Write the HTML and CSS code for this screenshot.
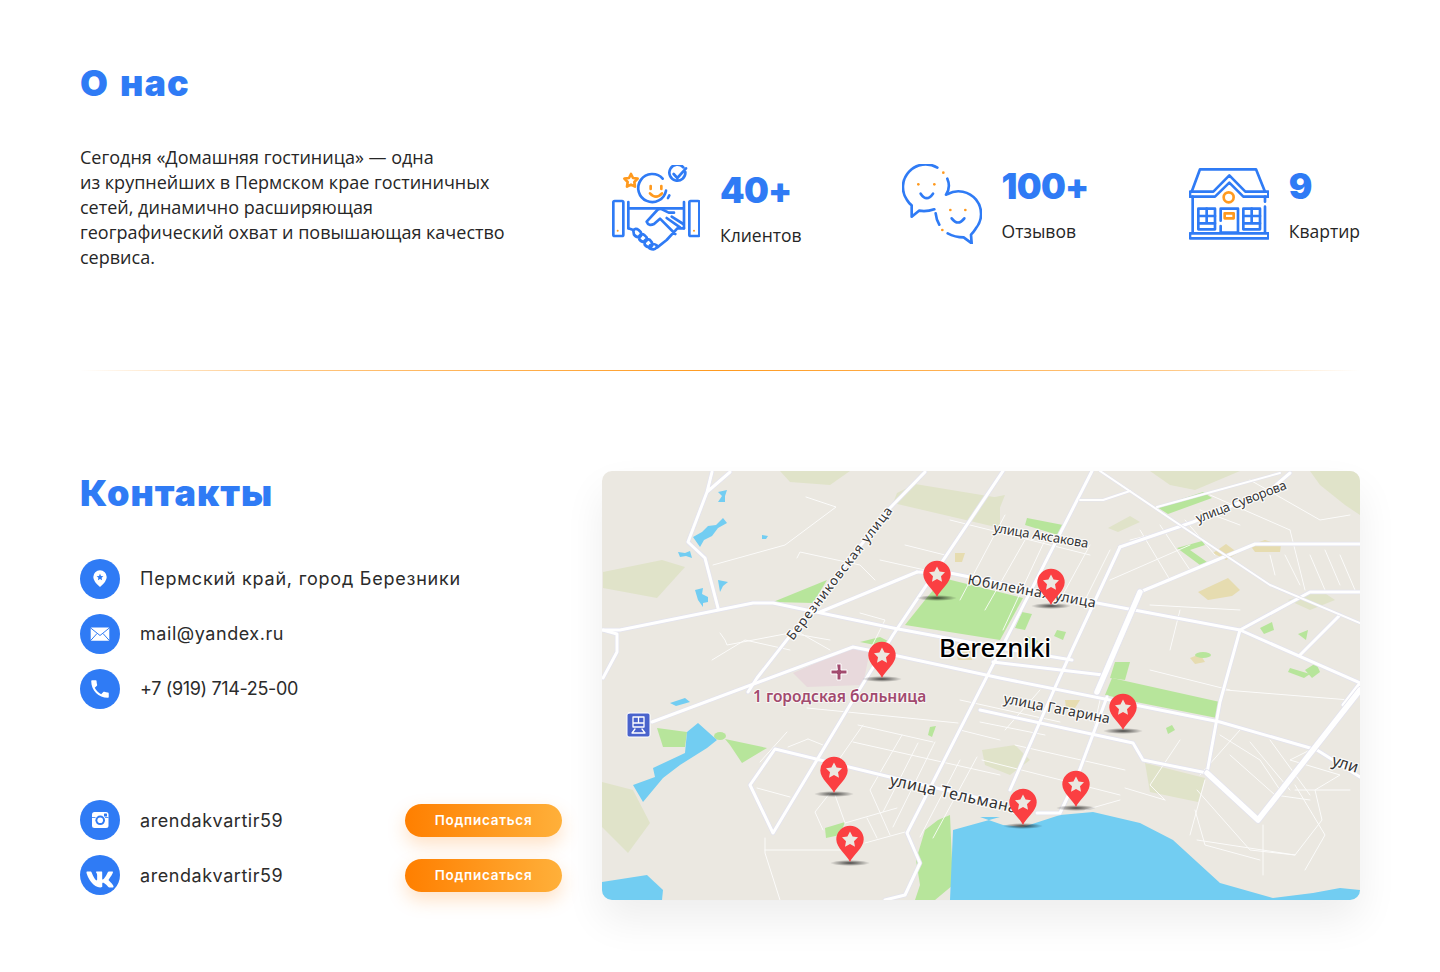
FILE: index.html
```html
<!DOCTYPE html>
<html lang="ru">
<head>
<meta charset="utf-8">
<title>О нас</title>
<link rel="stylesheet" href="styles.css">
</head>
<body>
<section class="about">
  <h2 class="heading">О нас</h2>
  <div class="about-body">
    <p class="about-text">Сегодня «Домашняя гостиница» — одна<br>из крупнейших в Пермском крае гостиничных сетей, динамично расширяющая географический охват и повышающая качество сервиса.</p>
    <div class="stats">
      <div class="stat stat-first">
        <svg class="stat-icon icon-hands" viewBox="36 45 264 258" fill="none" stroke-linecap="round" stroke-linejoin="round">
          <g class="ib">
            <rect x="40" y="153" width="30" height="105" rx="4"/>
            <rect x="268" y="153" width="30" height="105" rx="4"/>
            <path d="M85 156V235M252 156V235M85 175H252"/>
            <path d="M140 215L172 180Q178 175 186 178L206 188H222M140 215Q146 230 162 222L180 206L226 252M200 204L240 232M215 200L250 222M252 235H232L200 270L172 292M85 235L100 240"/>
            <path d="M100 242Q106 232 116 240L122 246Q128 256 118 262Q108 262 102 254ZM118 258Q124 248 134 256L140 262Q144 272 134 276Q124 276 118 268ZM134 272Q140 264 150 270L156 278Q160 288 150 292Q140 292 134 284ZM150 286Q160 278 170 286Q172 296 160 298Q150 298 146 292"/>
            <path d="M198 122A42 42 0 1 1 188 86M208 136L204 144"/>
            <path d="M250 52A24 24 0 1 0 256 66M221 72L232 84L258 55"/>
          </g>
          <g class="io">
            <path d="M93 72L99 84L113 86L103 96L105 110L93 104L81 110L83 96L73 86L87 84Z"/>
            <path d="M152 108V117M184 108V117M150 130Q168 150 186 130"/>
          </g>
          <circle class="dot" cx="53" cy="242" r="3"/><circle class="dot" cx="282" cy="242" r="3"/>
        </svg>
        <div class="stat-copy"><div class="stat-num">40+</div><div class="stat-label">Клиентов</div></div>
      </div>
      <div class="stat">
        <svg class="stat-icon icon-chat" viewBox="39 42 240 240" fill="none" stroke-linecap="round" stroke-linejoin="round">
          <g class="ib">
            <path d="M145 53A68 68 0 0 0 54 150Q60 160 68 166L68 200L90 182Q112 186 136 178M175 86Q186 112 171 134"/>
            <path d="M176 132A68 68 0 0 1 260 236Q252 248 246 254L248 280L224 262Q198 262 176 250M140 190Q142 210 151 224"/>
            <path d="M95 131Q113 158 132 131M188 205Q207 230 226 205"/>
          </g>
          <circle class="dot" cx="163" cy="68" r="4"/><circle class="dot" cx="88" cy="103" r="4"/><circle class="dot" cx="136" cy="103" r="4"/>
          <circle class="dot" cx="184" cy="180" r="4"/><circle class="dot" cx="229" cy="180" r="4"/><circle class="dot" cx="160" cy="240" r="4"/>
        </svg>
        <div class="stat-copy"><div class="stat-num">100+</div><div class="stat-label">Отзывов</div></div>
      </div>
      <div class="stat">
        <svg class="stat-icon icon-house" viewBox="57 54 240 216" fill="none" stroke-linecap="round" stroke-linejoin="round">
          <g class="ib">
            <path d="M65 125L90 58H258L285 125"/>
            <path d="M60 125H130L178 76L226 125H295V140H220L178 98L135 140H60Z"/>
            <path d="M68 140V248M285 170V248M285 140V155"/>
            <rect x="60" y="250" width="235" height="15"/>
            <path d="M152 212V176H204V248H152V228"/>
            <rect x="85" y="176" width="50" height="62"/><path d="M85 198H135M85 220H135M110 176V220"/>
            <rect x="220" y="176" width="50" height="62"/><path d="M220 198H270M220 220H270M245 176V220"/>
          </g>
          <g class="io"><circle cx="176" cy="142" r="15"/><rect x="164" y="190" width="27" height="15"/></g>
        </svg>
        <div class="stat-copy"><div class="stat-num">9</div><div class="stat-label">Квартир</div></div>
      </div>
    </div>
  </div>
</section>

<div class="divider"></div>

<section class="contacts">
  <div class="contacts-left">
    <h2 class="heading">Контакты</h2>
    <ul class="contact-list">
      <li class="contact-row">
        <span class="badge"><svg viewBox="0 0 40 40"><path class="w" d="M20 28Q13.300 22.500 13.300 18A6.700 6.700 0 0 1 26.700 18Q26.700 22.500 20 28Z"/><path class="b" d="M20 14.700L21 17L23.400 17.200L21.600 18.800L22.100 21.200L20 20L17.900 21.200L18.400 18.800L16.600 17.200L19 17Z"/></svg></span>
        <span class="contact-text text-cyr">Пермский край, город Березники</span>
      </li>
      <li class="contact-row">
        <span class="badge"><svg viewBox="0 0 40 40"><rect class="w" x="10.700" y="13.400" width="18.600" height="13.300" rx="1"/><path class="bl" d="M10.700 14L20 21.500L29.300 14M10.700 26.500L17 19.500M29.300 26.500L23 19.500"/></svg></span>
        <span class="contact-text">mail@yandex.ru</span>
      </li>
      <li class="contact-row">
        <span class="badge"><svg viewBox="-8.500 -8.500 41 41"><path class="w" d="M6.620 10.790c1.440 2.830 3.760 5.140 6.590 6.590l2.200-2.200c.27-.27.67-.36 1.020-.24 1.120.37 2.330.57 3.570.57.55 0 1 .45 1 1V20c0 .55-.45 1-1 1-9.390 0-17-7.610-17-17 0-.55.45-1 1-1h3.500c.55 0 1 .45 1 1 0 1.250.2 2.450.57 3.570.11.35.03.74-.25 1.020l-2.200 2.200z"/></svg></span>
        <span class="contact-text text-num">+7 (919) 714-25-00</span>
      </li>
    </ul>
    <ul class="social-list">
      <li class="contact-row">
        <span class="badge"><svg viewBox="0 0 40 40"><rect class="w" x="12" y="12" width="16.500" height="16" rx="2.500"/><circle class="b" cx="20.200" cy="20.300" r="4.800"/><circle class="w" cx="20.200" cy="20.300" r="2.800"/><rect class="b" x="24" y="13.500" width="3" height="3" rx=".6"/><path class="bl thin" d="M12 17.500H15.500M25 17.500H28.500"/></svg></span>
        <span class="contact-text">arendakvartir59</span>
        <a class="subscribe" href="#">Подписаться</a>
      </li>
      <li class="contact-row">
        <span class="badge"><svg viewBox="-110 -230 796 796"><path class="w" d="M545 117.700c3.700-12.500 0-21.700-17.800-21.700h-58.900c-15 0-21.900 7.900-25.600 18.700 0 0-30.500 75.600-73.600 124.700-13.900 13.900-20.300 18.400-27.900 18.400-3.800 0-9.400-4.500-9.400-17V117.700c0-15-4.200-21.700-16.600-21.700h-92.600c-9.400 0-15 7-15 13.500 0 14.200 21.200 17.500 23.400 57.500v86.800c0 19-3.400 22.500-10.900 22.500-20 0-68.600-73.400-97.400-157.400-5.800-16.300-11.500-22.900-26.600-22.900H38.800c-16.800 0-20.200 7.900-20.200 16.700 0 15.600 20 93.100 93.100 195.500C160.400 378.100 229 416 291.400 416c37.500 0 42.100-8.400 42.100-22.900 0-66.800-3.400-73.100 15.400-73.100 8.700 0 23.700 4.400 58.700 38.100 40 40 46.600 57.900 69 57.900h58.900c16.800 0 25.300-8.400 20.400-25-11.200-34.900-86.900-106.700-90.300-111.500-8.700-11.200-6.200-16.200 0-26.200.1-.1 72-101.300 79.400-135.600z"/></svg></span>
        <span class="contact-text">arendakvartir59</span>
        <a class="subscribe" href="#">Подписаться</a>
      </li>
    </ul>
  </div>

  <div class="map">
    <svg class="map-svg" viewBox="602 471 758 429" fill="none" stroke-linecap="round" stroke-linejoin="round">
      <defs>
        <g id="majors">
          <path d="M603 630L620 630L753 603H773L893 628L1000 648L1072 660"/>
          <path d="M917 572L950 573L1097 603L1240 630L1360 683"/>
          <path d="M1003 471L893 635L853 700L773 833L750 785L775 749L890 777L1000 803"/>
          <path d="M1092 471L907 833L920 863L905 895L885 900"/>
          <path d="M1120 547L1073 648L1053 692L1010 790"/>
          <path d="M1120 547L1193 522L1270 490L1290 473"/>
          <path d="M1140 592L1097 692"/>
          <path d="M1140 592L1255 544H1360"/>
          <path d="M1240 630L1310 592H1360M1240 630L1220 702L1207 773"/>
          <path d="M1340 615L1300 655M1360 683L1343 705"/>
          <path d="M652 722L853 647L893 655L1000 678L1220 722L1317 750L1360 777"/>
          <path d="M993 662L1103 675"/>
          <path d="M1107 697L1077 777L1060 813H1037"/>
          <path d="M1207 773L1143 760L1133 743L980 710"/>
          <path d="M925 472L890 508L757 678L748 692"/>
          <path d="M730 472L707 492L688 542L705 558L718 608M712 472L707 492"/>
          <path d="M603 630L617 634V652L603 678"/>
          <path d="M820 612L917 572"/>
        </g>
        <g id="thins">
          <path d="M1100 471L1180 525L1270 585L1360 623"/>
          <path d="M1080 500H1103L1130 491"/>
          <path d="M1157 507L1280 473"/>
        </g>
        <g id="thick">
          <path d="M1360 690L1258 820L1207 773"/>
          <path d="M1140 592L1097 692"/>
        </g>
        <symbol id="pin" overflow="visible">
          <path class="pin-body" d="M0 0C-3 -7 -13.700 -14 -13.700 -22.500A13.700 13.700 0 1 1 13.700 -22.500C13.700 -14 3 -7 0 0Z"/>
          <path class="pin-star" d="M0 -30.500L2.600 -25.500L8 -24.700L4 -20.800L5 -15.300L0 -18L-5 -15.300L-4 -20.800L-8 -24.700L-2.600 -25.500Z"/>
        </symbol>
        <radialGradient id="shadow"><stop offset="0" stop-color="#000" stop-opacity=".7"/><stop offset="1" stop-color="#000" stop-opacity="0"/></radialGradient>
      </defs>

      <rect class="land" x="602" y="471" width="758" height="429"/>

      <g class="pale">
        <path d="M897 493L915 484L1000 498V528L893 503Z"/>
        <path d="M603 572L662 560L685 567L657 598L603 588Z"/>
        <path d="M602 782L633 790L650 823L628 853L602 827Z"/>
        <path d="M780 471H850L830 485L790 482Z"/>
        <path d="M1150 471H1240L1195 490L1170 485Z"/>
        <path d="M1310 471H1360V515L1345 505L1320 485Z"/>
        <path d="M1108 528L1130 516L1140 522L1118 532Z"/>
        <path d="M980 500L1005 495L995 520L980 520Z"/>
        <path d="M1145 763L1205 778L1198 802L1150 792Z"/>
        <path d="M982 750L1015 745L1030 760L1010 775L985 765Z"/>
        <path d="M1288 600L1320 590L1335 600L1310 610Z"/>
      </g>
      <g class="sand">
        <path d="M1198 592L1228 578L1240 590L1232 596L1208 600Z"/>
        <path d="M1213 553L1226 544L1238 553L1226 560Z"/>
        <path d="M1250 545L1265 540L1281 545L1280 552L1255 552Z"/>
        <path d="M1190 658L1200 654L1205 662L1195 664Z"/>
        <path d="M955 553H965L962 562H955Z"/>
        <path d="M955 648L975 646L972 660L958 660Z"/>
        <path d="M1065 700L1080 700L1075 708L1066 708Z"/>
      </g>
      <g class="park">
        <path d="M943 578L1023 598L1000 640L905 625L925 600Z"/>
        <path d="M773 602L827 580L813 603Z"/>
        <path d="M860 642L880 637L890 642L885 647Z"/>
        <path d="M1157 507L1203 492L1212 498L1168 514Z"/>
        <path d="M1177 548L1202 541L1205 545L1190 550L1207 562L1200 565Z"/>
        <path d="M1027 518L1063 525L1058 535L1025 525Z"/>
        <path d="M1112 678L1220 702L1217 718L1136 702L1105 695Z"/>
        <path d="M1115 662L1130 662L1125 680L1110 678Z"/>
        <path d="M1022 612L1032 614L1025 630L1015 628Z"/>
        <path d="M657 728L687 732L685 747L663 747Z"/>
        <path d="M725 739L767 748L742 763L730 745Z"/>
        <ellipse cx="720" cy="736" rx="6" ry="4"/>
        <path d="M825 828L845 822L840 835L826 838Z"/>
        <path d="M916 860L925 830L938 820L950 815L953 885L935 900H915L920 885Z"/>
        <path d="M1260 628L1272 622L1274 630L1264 634Z"/>
        <path d="M1290 668L1310 674L1304 678L1288 672Z"/>
        <path d="M1305 670L1316 663L1320 672L1312 678Z"/>
        <path d="M1298 634L1308 630L1306 640Z"/>
        <path d="M1057 630L1066 632L1063 640L1054 636Z"/>
        <path d="M930 727L936 726L932 737L928 735Z"/>
        <path d="M1166 728L1172 725L1175 730L1168 734Z"/>
        <path d="M1027 636L1038 641L1033 650L1024 645Z"/>
        <ellipse cx="1203" cy="655" rx="8" ry="3"/>
      </g>
      <path class="hospital" d="M793 673L853 647L870 650L863 685L807 687Z"/>
      <g class="water">
        <path d="M980 817L1003 825L1023 827L1060 815L1093 812L1140 823L1173 840L1220 883L1273 898L1313 893L1340 888L1360 890V900H950L953 830L1000 817Z"/>
        <path d="M633 785L655 777L653 768L685 753L687 732L698 723L717 740L707 748L680 765L663 778L643 802Z"/>
        <path d="M602 882L647 875L663 890L662 900H602Z"/>
        <path d="M693 537L702 532L708 526L716 525L723 518L727 523L718 528L712 536L704 540L700 547Z"/>
        <path d="M678 552L685 553L690 551L692 558L686 556L680 557Z"/>
        <path d="M718 580L728 582L723 586L720 592Z"/>
        <path d="M695 590L703 588L702 594L708 597L708 602L703 603L703 607L698 600Z"/>
        <path d="M718 492L727 490L725 496L725 502L718 502L722 496Z"/>
        <path d="M670 703L685 698L690 702L676 706Z"/>
        <path d="M762 535L768 536L766 539H762Z"/>
      </g>

      <g class="minor">
        <path d="M806 497L836 507L785 545L713 565M797 558L800 552L860 565L875 580M860 613L885 620L870 650"/>
        <path d="M720 633L725 640L727 645L790 633L830 640M712 660L745 640L790 650"/>
        <path d="M800 633L830 650"/>
        <path d="M905 545L945 555M880 560L925 570M950 520L1090 555"/>
        <path d="M1005 515L960 600M1025 540L985 610M1045 540L1003 630"/>
        <path d="M1090 545L1060 600M1110 550L1085 600"/>
        <path d="M1130 540L1170 530M1110 580L1190 545M1140 530L1170 580M1160 525L1190 570M1185 520L1215 555"/>
        <path d="M1200 510L1240 525M1210 495L1290 530M1250 480L1320 520L1350 515"/>
        <path d="M1290 530L1305 590M1270 555L1275 575M1285 555L1300 585M1310 555L1325 590M1325 550L1340 585M1340 555L1355 590"/>
        <path d="M1150 605L1240 610M1180 610L1170 650M1150 670L1230 690"/>
        <path d="M1225 690L1350 700"/>
        <path d="M1100 700L1090 745M1040 690L1005 730M980 722L1045 735M960 700L1060 722M982 760L1120 795M1015 745L1125 770"/>
        <path d="M863 725L840 758M808 739L788 747M808 739L823 745M787 732L760 762"/>
        <path d="M835 795L845 823M830 793L815 812L823 830M845 823L897 808M867 818L877 838"/>
        <path d="M890 835L870 790L902 735M883 812L918 743M893 827L935 742M865 843L905 832"/>
        <path d="M765 850H847M765 838V853L780 900M757 788L790 797"/>
        <path d="M920 837L960 760M933 838L977 757"/>
        <path d="M807 708L958 723M960 730L1000 740M858 725L933 742M853 742L1000 775"/>
        <path d="M1240 730L1200 775M1220 735L1260 760L1280 790M1230 755L1275 795L1310 800M1250 742L1290 790M1270 740L1310 795"/>
        <path d="M1310 750L1290 760L1340 775L1315 790L1322 820L1295 855L1197 840M1197 790L1250 850L1295 855M1195 810L1205 845L1260 860M1295 785L1325 835L1305 870M1263 825L1263 875M1295 790H1350"/>
        <path d="M1205 780L1190 835M1180 740L1150 785L1165 800M1125 788L1165 800M1085 810L1120 800"/>
      </g>

      <use class="casing" href="#majors"/><use class="road" href="#majors"/>
      <use class="casing slim" href="#thins"/><use class="road slim" href="#thins"/>
      <use class="casing wide" href="#thick"/><use class="road wide" href="#thick"/>

      <g class="pin-shadows">
        <ellipse cx="937" cy="598" rx="20" ry="3" fill="url(#shadow)"/><ellipse cx="882" cy="679" rx="20" ry="3" fill="url(#shadow)"/>
        <ellipse cx="1051" cy="606" rx="20" ry="3" fill="url(#shadow)"/><ellipse cx="1123" cy="731" rx="20" ry="3" fill="url(#shadow)"/>
        <ellipse cx="1076" cy="808" rx="20" ry="3" fill="url(#shadow)"/><ellipse cx="1023" cy="826" rx="20" ry="3" fill="url(#shadow)"/>
        <ellipse cx="834" cy="794" rx="20" ry="3" fill="url(#shadow)"/><ellipse cx="850" cy="863" rx="20" ry="3" fill="url(#shadow)"/>
      </g>

      <g class="labels">
        <text class="lbl" transform="translate(793 641) rotate(-52.500)" textLength="164">Березниковская улица</text>
        <text class="lbl" transform="translate(993 532) rotate(9.500)" textLength="96">улица Аксакова</text>
        <text class="lbl" transform="translate(1198 523) rotate(-21)" textLength="96">улица Суворова</text>
        <text class="lbl lbl-lg" transform="translate(967 584) rotate(10.500)" textLength="130">Юбилейная улица</text>
        <text class="lbl lbl-lg" transform="translate(1003 703) rotate(11)" textLength="108">улица Гагарина</text>
        <text class="lbl lbl-xl" transform="translate(889 785) rotate(12.500)" textLength="130">улица Тельмана</text>
        <text class="lbl lbl-xl" transform="translate(1331 765) rotate(17)">ули</text>
        <text class="town" x="939" y="657">Berezniki</text>
        <text class="poi" x="753" y="702">1 городская больница</text>
      </g>
      <path class="cross" d="M837 664H841V670H847V674H841V680H837V674H831V670H837Z"/>
      <g class="metro">
        <rect x="627" y="713" width="23" height="24" rx="2"/>
        <path class="metro-w" d="M633 717H644V727H633ZM635 729L632 733H645L642 729M638.500 717V723M633 723H644"/>
      </g>

      <use href="#pin" x="937" y="597"/><use href="#pin" x="882" y="678"/>
      <use href="#pin" x="1051" y="605"/><use href="#pin" x="1123" y="730"/>
      <use href="#pin" x="1076" y="807"/><use href="#pin" x="1023" y="825"/>
      <use href="#pin" x="834" y="793"/><use href="#pin" x="850" y="862"/>
    </svg>
  </div>
</section>
</body>
</html>
```
FILE: styles.css
```css
* { box-sizing: border-box; }
html, body { margin: 0; padding: 0; }
body {
  width: 1440px;
  height: 972px;
  overflow: hidden;
  background: #fff;
  color: #222;
  font-family: "Open Sans", "Noto Sans", sans-serif;
}
ul { list-style: none; margin: 0; padding: 0; }
.heading {
  margin: 0;
  font: 900 36px/40px Inter, "Noto Sans", sans-serif;
  letter-spacing: 1px;
  word-spacing: 3px;
  color: #2f7bf5;
}
.about { padding: 63px 80px 0; }
.about-body { display: flex; margin-top: 42px; height: 125px; }
.about-text {
  width: 430px;
  margin: 0;
  font-size: 18px;
  line-height: 25px;
  color: #262626;
}
.stats {
  flex: 1;
  display: flex;
  justify-content: space-between;
  margin-left: 102px;
  padding-top: 19px;
}
.stat { display: flex; gap: 20px; align-items: flex-start; }
.stat-first { margin-top: 1px; }
.stat-icon { display: block; flex: none; }
.icon-hands { width: 88px; height: 86px; }
.icon-chat { width: 80px; height: 80px; }
.icon-house { width: 80px; height: 72px; margin-top: 4px; }
.stat-copy { padding-top: 1px; }
.stat-first .stat-copy { padding-top: 4px; }
.stat-num {
  font: 900 35px/42px Inter, "Noto Sans", sans-serif;
  letter-spacing: -.7px;
  color: #2f7bf5;
}
.stat-label { margin-top: 12px; font-size: 17.500px; line-height: 25px; color: #262626; }
.ib path, .ib rect, .ib circle { stroke: #2f7bf5; stroke-width: 8; }
.io path, .io rect, .io circle { stroke: #ff9a1f; stroke-width: 8; }
.dot { fill: #ff9a1f; }
.divider {
  height: 1px;
  margin: 100px 80px 0;
  background: linear-gradient(90deg, rgba(255,154,31,0), rgba(255,154,31,.55) 15%, #ff9a1f 50%, rgba(255,154,31,.55) 85%, rgba(255,154,31,0));
}
.contacts { display: flex; gap: 40px; margin: 100px 80px 0; }
.contacts-left { width: 482px; padding-top: 2px; }
.contact-list { display: flex; flex-direction: column; gap: 15px; margin-top: 46px; }
.social-list { display: flex; flex-direction: column; gap: 15px; margin-top: 91px; }
.contact-row { display: flex; align-items: center; height: 40px; }
.badge {
  flex: none;
  width: 40px;
  height: 40px;
  border-radius: 50%;
  background: #2f7bf5;
}
.badge svg { display: block; width: 40px; height: 40px; }
.w { fill: #fff; }
.b { fill: #2f7bf5; }
.bl { fill: none; stroke: #2f7bf5; stroke-width: 1; }
.bl.thin { stroke-width: .8; }
.contact-text {
  margin-left: 20px;
  font: 400 18px/24px Inter, "Noto Sans", sans-serif;
  letter-spacing: .55px;
  color: #2b2b2b;
}
.social-list .contact-text { padding-top: 1px; }
.text-cyr { letter-spacing: .77px; }
.text-num { letter-spacing: -.35px; }
.subscribe {
  margin-left: auto;
  width: 157px;
  height: 33px;
  border-radius: 17px;
  background: linear-gradient(90deg, #ff7f00, #ffb03a);
  box-shadow: 0 8px 18px rgba(255,140,30,.25);
  color: #fff;
  font: 600 13.500px/33px Inter, "Noto Sans", sans-serif;
  letter-spacing: .75px;
  text-align: center;
  text-decoration: none;
}
.map {
  width: 758px;
  height: 429px;
  border-radius: 10px;
  overflow: hidden;
  box-shadow: 0 20px 40px rgba(0,0,0,.07);
}
.map-svg { display: block; width: 758px; height: 429px; }
.land { fill: #ebe8e1; }
.pale { fill: #e0e3c9; }
.sand { fill: #e6dcb0; }
.park { fill: #b7e59b; }
.hospital { fill: #e8d9dc; }
.water { fill: #72cdf2; }
.minor { stroke: #fff; stroke-width: 1; opacity: .85; }
.casing { stroke: #e3e3ee; stroke-width: 4.500; }
.road { stroke: #fff; stroke-width: 3; }
.casing.slim { stroke-width: 3; }
.road.slim { stroke-width: 2; }
.casing.wide { stroke-width: 7; }
.road.wide { stroke-width: 5.500; }
.lbl {
  font: 400 13px "Noto Sans", sans-serif;
  fill: #333;
  stroke: #fff;
  stroke-width: 2.500px;
  stroke-opacity: .8;
  paint-order: stroke;
}
.lbl-lg { font-size: 14px; }
.lbl-xl { font-size: 16px; }
.town {
  font: 500 25.500px "Noto Sans", sans-serif;
  fill: #000;
  stroke: #fff;
  stroke-width: 3px;
  paint-order: stroke;
}
.poi {
  font: 600 15.500px "Noto Sans", sans-serif;
  fill: #a24a6e;
  stroke: #fff;
  stroke-width: 2px;
  stroke-opacity: .7;
  paint-order: stroke;
}
.cross { fill: #a24a6e; stroke: #fff; stroke-width: 1; }
.metro rect { fill: #4a63cc; stroke: #fff; stroke-width: 1; }
.metro-w { stroke: #fff; stroke-width: 1.300; }
.pin-body { fill: #fb3f42; }
.pin-star { fill: #ebe8e1; }
```
